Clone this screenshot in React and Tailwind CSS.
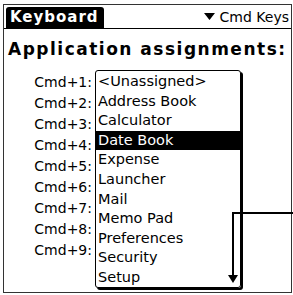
export default function App() {
  const items = [
    "<Unassigned>",
    "Address Book",
    "Calculator",
    "Date Book",
    "Expense",
    "Launcher",
    "Mail",
    "Memo Pad",
    "Preferences",
    "Security",
    "Setup",
  ];
  const labels = ["Cmd+1:", "Cmd+2:", "Cmd+3:", "Cmd+4:", "Cmd+5:", "Cmd+6:", "Cmd+7:", "Cmd+8:", "Cmd+9:"];
  return (
    <div className="relative w-[293px] h-[295px] overflow-hidden bg-white pl-[3px] pt-[4px] text-black font-['DejaVu_Sans',sans-serif]">
      <div className="flex h-[289px] w-[289px] flex-col border border-[#333]">
        <div className="flex h-[24px] border-b border-black">
          <div className="ml-[2px] mt-[2px] h-[21px] w-[98px] rounded-t-[3px] bg-black pl-[4px] text-[15px] font-bold leading-[21px] tracking-[1px] text-white">
            Keyboard
          </div>
          <div className="flex flex-1 items-center justify-end gap-[5px] pr-[2px] text-[14px] leading-[20px]">
            <svg width="11" height="7" viewBox="0 0 11 7">
              <path d="M0 0 H11 L5.5 7 Z" fill="#000" />
            </svg>
            <span>Cmd Keys</span>
          </div>
        </div>
        <div className="mt-[9px] h-[22px] pl-[4px] text-[17px] font-bold leading-[22px] tracking-[1.5px]">
          Application assignments:
        </div>
        <div className="mt-[10px] flex">
          <div className="w-[88px] pt-[2px] text-right text-[14px]">
            {labels.map((l) => (
              <div key={l} className="h-[21px] leading-[21px]">
                {l}
              </div>
            ))}
          </div>
          <div className="ml-[3px] h-[218px] w-[146px] overflow-hidden rounded-[3px] border border-black py-[1px] text-[14.5px] shadow-[2px_2px_0_#000]">
            {items.map((it, i) => (
              <div
                key={it}
                className={
                  i === 3
                    ? "h-[19.6px] bg-black px-[2px] leading-[19.6px] text-white"
                    : "h-[19.6px] px-[2px] leading-[19.6px]"
                }
              >
                {it}
              </div>
            ))}
          </div>
        </div>
      </div>
      <svg className="absolute left-[226px] top-[211px]" width="67" height="76" viewBox="0 0 67 76">
        <path d="M7 2 H67 M7 1 V66" stroke="#000" strokeWidth="2" fill="none" />
        <path d="M2 64 H12 L7 72 Z" fill="#000" />
      </svg>
    </div>
  );
}
